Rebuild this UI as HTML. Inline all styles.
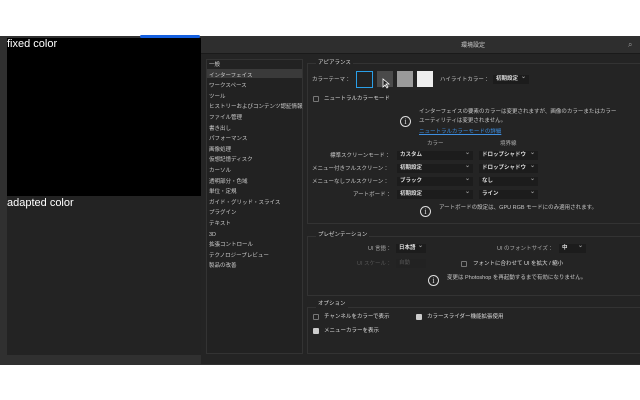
<!DOCTYPE html><html><head><meta charset="utf-8"><style>
*{margin:0;padding:0;box-sizing:border-box}
body{width:640px;height:400px;background:#fff;position:relative;overflow:hidden;font-family:"Liberation Sans","Noto Sans CJK JP",sans-serif}
.a{position:absolute}
.t{position:absolute;font-size:6px;color:#c8c8c8;white-space:nowrap;line-height:8px}
.s{font-size:5.5px}
.dd{position:absolute;height:9px;background:#1c1c1c;font-size:5.5px;color:#ddd;line-height:9px;padding-left:3px;font-weight:bold}
.dd:after{content:"⌄";position:absolute;right:3px;top:-2px;color:#999;font-size:6px}
.cb{position:absolute;width:6px;height:6px;border:1px solid #777;border-radius:1px}
.ck{background:#ccc;border-color:#ccc}
.ic{position:absolute;width:11px;height:11px;border:1px solid #ddd;border-radius:50%;color:#ddd;font-size:8px;line-height:9px;text-align:center;font-family:"Liberation Serif",serif}
</style></head><body>
<div class="a" style="left:0;top:36px;width:640px;height:329px;background:#303030"></div>
<div class="a" style="left:140px;top:35px;width:60px;height:3px;background:#1560e0;border-radius:2px"></div>
<div class="a" style="left:7px;top:38px;width:194px;height:158px;background:#000"></div>
<div class="a" style="left:7px;top:196px;width:194px;height:159px;background:#232323"></div>
<div class="a" style="left:7px;top:38px;color:#fff;font-size:11px">fixed color</div>
<div class="a" style="left:7px;top:197px;color:#fff;font-size:11px">adapted color</div>
<div class="a" style="left:201px;top:38px;width:439px;height:326px;background:#242424;border-radius:5px 0 0 0"></div>
<div class="a" style="left:201px;top:38px;width:439px;height:16px;background:#2e2e2e;border-radius:5px 0 0 0;border-bottom:1px solid #1a1a1a"></div>
<div class="t" style="left:461px;top:42px;color:#ccc">環境設定</div>
<div class="t" style="left:628px;top:41px;color:#999;font-size:8px">⌕</div>
<div class="a" style="left:206px;top:59px;width:97px;height:295px;border:1px solid #333;background:#222"></div>
<div class="a" style="left:207px;top:69px;width:95px;height:9px;background:#3a3a3a"></div>
<div class="t s" style="left:209px;top:60px;line-height:10.6px;color:#ccc">一般<br>インターフェイス<br>ワークスペース<br>ツール<br>ヒストリーおよびコンテンツ認証情報<br>ファイル管理<br>書き出し<br>パフォーマンス<br>画像処理<br>仮想記憶ディスク<br>カーソル<br>透明部分・色域<br>単位・定規<br>ガイド・グリッド・スライス<br>プラグイン<br>テキスト<br>3D<br>拡張コントロール<br>テクノロジープレビュー<br>製品の改善</div>
<div class="a" style="left:307px;top:63px;width:340px;height:161px;border:1px solid #333"></div>
<div class="a" style="left:307px;top:236px;width:340px;height:60px;border:1px solid #333"></div>
<div class="a" style="left:307px;top:307px;width:340px;height:47px;border:1px solid #333"></div>
<div class="t s" style="left:316px;top:59px;background:#242424;padding:0 2px;color:#ddd">アピアランス</div>
<div class="t s" style="left:312px;top:76px">カラーテーマ：</div>
<div class="a" style="left:356px;top:71px;width:17px;height:17px;border:1px solid #2a9fe8;background:#222"></div>
<div class="a" style="left:377px;top:71px;width:16px;height:16px;background:#4a4a4a"></div>
<svg class="a" style="left:382px;top:78px" width="8" height="11" viewBox="0 0 8 11"><path d="M1 1 L1 9 L3 7 L5 10 L6 9 L4 6 L7 6 Z" fill="#222" stroke="#fff" stroke-width="0.8"/></svg>
<div class="a" style="left:397px;top:71px;width:16px;height:16px;background:#9a9a9a"></div>
<div class="a" style="left:417px;top:71px;width:16px;height:16px;background:#eee"></div>
<div class="t s" style="left:440px;top:76px">ハイライトカラー：</div>
<div class="dd" style="left:493px;top:75px;width:36px">初期設定</div>
<div class="cb" style="left:313px;top:96px"></div>
<div class="t s" style="left:324px;top:95px;color:#ddd">ニュートラルカラーモード</div>
<div class="ic" style="left:400px;top:116px">i</div>
<div class="t s" style="left:419px;top:108px;line-height:9px">インターフェイスの要素のカラーは変更されますが、画像のカラーまたはカラー<br>ユーティリティは変更されません。</div>
<div class="t s" style="left:419px;top:128px;color:#3d8ee0;text-decoration:underline">ニュートラルカラーモードの詳細</div>
<div class="t s" style="left:427px;top:140px;color:#aaa">カラー</div>
<div class="t s" style="left:500px;top:140px;color:#aaa">境界線</div>
<div class="t s" style="left:330px;top:152px">標準スクリーンモード：</div>
<div class="t s" style="left:312px;top:165px">メニュー付きフルスクリーン：</div>
<div class="t s" style="left:312px;top:178px">メニューなしフルスクリーン：</div>
<div class="t s" style="left:353px;top:191px">アートボード：</div>
<div class="dd" style="left:397px;top:151px;width:76px">カスタム</div>
<div class="dd" style="left:397px;top:164px;width:76px">初期設定</div>
<div class="dd" style="left:397px;top:177px;width:76px">ブラック</div>
<div class="dd" style="left:397px;top:190px;width:76px">初期設定</div>
<div class="dd" style="left:479px;top:151px;width:59px">ドロップシャドウ</div>
<div class="dd" style="left:479px;top:164px;width:59px">ドロップシャドウ</div>
<div class="dd" style="left:479px;top:177px;width:59px">なし</div>
<div class="dd" style="left:479px;top:190px;width:59px">ライン</div>
<div class="ic" style="left:420px;top:206px">i</div>
<div class="t s" style="left:439px;top:204px">アートボードの設定は、GPU RGB モードにのみ適用されます。</div>
<div class="t s" style="left:316px;top:231px;background:#242424;padding:0 2px;color:#ddd">プレゼンテーション</div>
<div class="t s" style="left:368px;top:245px;color:#aaa">UI 言語：</div>
<div class="dd" style="left:396px;top:244px;width:30px">日本語</div>
<div class="t s" style="left:497px;top:245px;color:#aaa">UI のフォントサイズ：</div>
<div class="dd" style="left:559px;top:244px;width:27px">中</div>
<div class="t s" style="left:357px;top:260px;color:#555">UI スケール：</div>
<div class="a" style="left:396px;top:259px;width:30px;height:9px;background:#222;font-size:5.5px;color:#555;padding-left:3px;line-height:9px">自動</div>
<div class="cb" style="left:461px;top:261px"></div>
<div class="t s" style="left:473px;top:260px;color:#ddd">フォントに合わせて UI を拡大 / 縮小</div>
<div class="ic" style="left:428px;top:275px">i</div>
<div class="t s" style="left:447px;top:274px">変更は Photoshop を再起動するまで有効になりません。</div>
<div class="t s" style="left:316px;top:300px;background:#242424;padding:0 2px;color:#ddd">オプション</div>
<div class="cb" style="left:313px;top:314px"></div>
<div class="t s" style="left:324px;top:313px;color:#ddd">チャンネルをカラーで表示</div>
<div class="cb ck" style="left:416px;top:314px"></div>
<div class="t s" style="left:427px;top:313px;color:#ddd">カラースライダー機能拡張使用</div>
<div class="cb ck" style="left:313px;top:328px"></div>
<div class="t s" style="left:324px;top:327px;color:#ddd">メニューカラーを表示</div>
</body></html>
